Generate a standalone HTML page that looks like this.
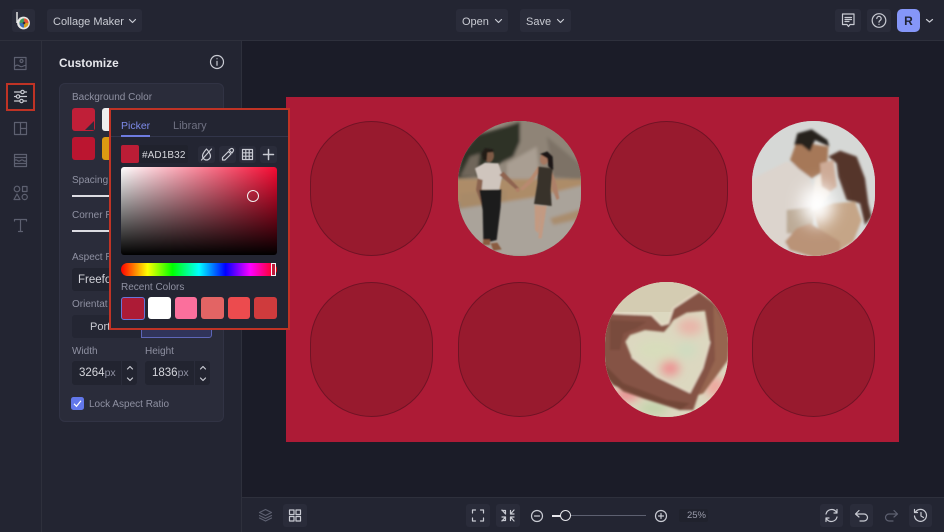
<!DOCTYPE html>
<html><head><meta charset="utf-8"><style>
*{box-sizing:border-box}
html,body{margin:0;padding:0;width:944px;height:532px;overflow:hidden;background:#1b1c28;font-family:"Liberation Sans",sans-serif}
.a{position:absolute}
.t{position:absolute;white-space:nowrap;line-height:14px}
.btn{position:absolute;background:#2a2c3a;border-radius:3px}
svg{position:absolute;overflow:visible}
.ic{fill:none;stroke:#c9cbd3;stroke-width:1.2;stroke-linecap:round;stroke-linejoin:round}
.dim{stroke:#5d6070}
.slot{position:absolute;width:123px;height:135px;border-radius:61.5px;background:#981a2e;border:1px solid #701325}
.ph{position:absolute;width:123px;height:135px;border-radius:61.5px;overflow:hidden;background:#ccc}
.ph svg{left:0;top:0}
.sw{position:absolute;border-radius:3px}
.lb{font-size:10px;color:#8f91a2}
</style></head><body>
<!-- top bar -->
<div class="a" style="left:0;top:0;width:944px;height:41px;background:#232532;border-bottom:1px solid #2e303c"></div>
<div class="btn" style="left:12px;top:9px;width:23px;height:23px"></div>
<svg style="left:12px;top:9px" width="23" height="23"><circle cx="11.5" cy="14" r="6.4" fill="#e8e8e8"/><path d="M5 3v11" stroke="#eee" stroke-width="1.4"/><circle cx="12" cy="14" r="4.6" fill="#d8a020"/><path d="M12 14V9.4A4.6 4.6 0 0 1 16.6 14Z" fill="#e2543a"/><path d="M12 14H7.4A4.6 4.6 0 0 1 12 9.4Z" fill="#3f9a5e"/><path d="M12 14v4.6A4.6 4.6 0 0 1 7.4 14Z" fill="#3a6fb8"/><circle cx="12" cy="14" r="1.3" fill="#333"/></svg>
<div class="btn" style="left:47px;top:9px;width:95px;height:23px"></div>
<div class="t" style="left:53px;top:15px;font-size:11px;color:#c9cbd3">Collage Maker</div>
<svg style="left:128px;top:18px" width="9" height="6" class="ic"><path d="M1.500 1.500 4.500 4.500 7.500 1.500"/></svg>
<div class="btn" style="left:456px;top:9px;width:52px;height:23px"></div>
<div class="t" style="left:462px;top:15px;font-size:11px;color:#c9cbd3">Open</div>
<svg style="left:494px;top:18px" width="9" height="6" class="ic"><path d="M1.500 1.500 4.500 4.500 7.500 1.500"/></svg>
<div class="btn" style="left:520px;top:9px;width:51px;height:23px"></div>
<div class="t" style="left:526px;top:15px;font-size:11px;color:#c9cbd3">Save</div>
<svg style="left:556px;top:18px" width="9" height="6" class="ic"><path d="M1.500 1.500 4.500 4.500 7.500 1.500"/></svg>
<div class="btn" style="left:835px;top:9px;width:26px;height:23px"></div>
<svg style="left:835px;top:9px" width="26" height="23" class="ic"><path d="M7.500 5h11.500v10.500h-4l-1.500 2-1.500-2h-4.500Z"/><path d="M10 8.500h6.500M10 10.500h6.500M10 12.500h4"/></svg>
<div class="btn" style="left:867px;top:9px;width:24px;height:23px"></div>
<svg style="left:867px;top:9px" width="24" height="23" class="ic"><circle cx="12" cy="11.500" r="6.800"/><path d="M9.800 9.500a2.200 2.200 0 1 1 3.400 1.900c-.8.500-1.200 1-1.200 1.800"/><path d="M12 15.300v.1"/></svg>
<div class="a" style="left:897px;top:9px;width:23px;height:23px;border-radius:5px;background:#8596f8"></div>
<div class="t" style="left:897px;top:14px;width:23px;text-align:center;font-size:12px;font-weight:bold;color:#1f2233">R</div>
<svg style="left:925px;top:18px" width="9" height="6" class="ic"><path d="M1.500 1.500 4.500 4 7.500 1.500"/></svg>

<!-- left rail -->
<div class="a" style="left:0;top:41px;width:42px;height:491px;background:#232532;border-right:1px solid #2e303c"></div>
<svg style="left:13px;top:56px" width="15" height="15" class="ic dim"><path d="M1.500 1.500h11.500v12h-11.500Z"/><circle cx="8.500" cy="5" r="1.500"/><path d="M1.500 10.500c3-2.500 4-1 6 0s3-1.500 5.500-1"/></svg>
<div class="a" style="left:6px;top:83px;width:29px;height:28px;border:2px solid #bf3325;background:#20222d"></div>
<svg style="left:13px;top:89px" width="15" height="15" class="ic"><path d="M1.500 3h12M1.500 7.500h12M1.500 12h12"/><circle cx="9.500" cy="3" r="1.700" fill="#20222d"/><circle cx="5" cy="7.500" r="1.700" fill="#20222d"/><circle cx="8.500" cy="12" r="1.700" fill="#20222d"/></svg>
<svg style="left:13px;top:121px" width="15" height="15" class="ic dim"><path d="M1.500 1.500h12v12h-12ZM7.500 1.500v12M7.500 7.500h6"/></svg>
<svg style="left:13px;top:153px" width="15" height="15" class="ic dim"><path d="M1.500 1.500h12v12h-12ZM1.500 4.500h12M1.500 10.500h12"/><path d="M1.500 7.500q1.500-1.200 3 0t3 0 3 0 3 0"/></svg>
<svg style="left:13px;top:185px" width="15" height="16" class="ic dim"><circle cx="4" cy="4" r="2.800"/><path d="M9.500 1.500h4.500v5h-4.500ZM4 9l3 5.500H1Z"/><circle cx="11.700" cy="12" r="2.600"/></svg>
<svg style="left:13px;top:218px" width="15" height="15" class="ic dim"><path d="M1.500 3V1.500h12V3M7.500 1.500v12M5.500 13.500h4"/></svg>

<!-- panel -->
<div class="a" style="left:42px;top:41px;width:200px;height:491px;background:#232532;border-right:1px solid #2e303c"></div>
<div class="t" style="left:59px;top:56px;font-size:11.800px;font-weight:bold;color:#e6e7ec">Customize</div>
<svg style="left:209px;top:54px" width="16" height="16" class="ic"><circle cx="8" cy="8" r="6.500"/><path d="M8 7.300v4M8 4.700v.1"/></svg>
<div class="a" style="left:59px;top:83px;width:165px;height:339px;background:#2a2c3a;border:1px solid #313344;border-radius:6px"></div>
<div class="t lb" style="left:72px;top:91px">Background Color</div>
<div class="sw" style="left:72px;top:108px;width:23px;height:23px;background:#c01f38"></div>
<svg style="left:84px;top:120px" width="11" height="11"><path d="M10 1v9H1Z" fill="#2a2c3a"/></svg>
<div class="sw" style="left:102px;top:108px;width:12px;height:23px;background:#eee"></div>
<div class="sw" style="left:72px;top:137px;width:23px;height:23px;background:#bb1530"></div>
<div class="sw" style="left:102px;top:137px;width:12px;height:23px;background:#dc9a12"></div>
<div class="t lb" style="left:72px;top:174px">Spacing</div>
<div class="a" style="left:72px;top:195px;width:40px;height:2px;background:#dcdce2"></div>
<div class="t lb" style="left:72px;top:209px">Corner R</div>
<div class="a" style="left:72px;top:230px;width:40px;height:2px;background:#dcdce2"></div>
<div class="t lb" style="left:72px;top:251px">Aspect R</div>
<div class="a" style="left:72px;top:268px;width:50px;height:23px;background:#222430;border-radius:3px"></div>
<div class="t" style="left:78px;top:273px;font-size:11.500px;color:#d5d6dc">Freefor</div>
<div class="t lb" style="left:72px;top:298px">Orientat</div>
<div class="a" style="left:72px;top:315px;width:70px;height:23px;background:#242633;border-radius:3px 0 0 3px"></div>
<div class="a" style="left:141px;top:315px;width:71px;height:23px;background:#30345a;border:1px solid #5e66b8;border-radius:0 3px 3px 0"></div>
<div class="t" style="left:90px;top:320px;font-size:11px;color:#c9cbd3">Portrait</div>
<div class="t lb" style="left:72px;top:345px">Width</div>
<div class="t lb" style="left:145px;top:345px">Height</div>
<div class="a" style="left:72px;top:361px;width:49px;height:24px;background:#222430;border-radius:3px 0 0 3px"></div>
<div class="a" style="left:122px;top:361px;width:15px;height:24px;background:#222430;border-radius:0 3px 3px 0"></div>
<div class="a" style="left:145px;top:361px;width:49px;height:24px;background:#222430;border-radius:3px 0 0 3px"></div>
<div class="a" style="left:195px;top:361px;width:15px;height:24px;background:#222430;border-radius:0 3px 3px 0"></div>
<div class="t" style="left:79px;top:366px;font-size:11.500px;color:#d5d6dc">3264<span style="color:#8f91a2;font-size:10.500px">px</span></div>
<div class="t" style="left:152px;top:366px;font-size:11.500px;color:#d5d6dc">1836<span style="color:#8f91a2;font-size:10.500px">px</span></div>
<svg style="left:126px;top:365px" width="8" height="17" class="ic"><path d="M1.500 4 4 1.500 6.500 4M1.500 13 4 15.500 6.500 13"/></svg>
<svg style="left:199px;top:365px" width="8" height="17" class="ic"><path d="M1.500 4 4 1.500 6.500 4M1.500 13 4 15.500 6.500 13"/></svg>
<div class="a" style="left:71px;top:397px;width:13px;height:13px;border-radius:2.500px;background:#6277ea"></div>
<svg style="left:71px;top:397px" width="13" height="13" fill="none" stroke="#fff" stroke-width="1.200"><path d="M3 6.800 5.500 9.300 10 3.800"/></svg>
<div class="t lb" style="left:89px;top:398px">Lock Aspect Ratio</div>

<!-- canvas -->
<div class="a" style="left:242px;top:41px;width:702px;height:456px;background:#1b1c28"></div>
<div class="a" style="left:286px;top:97px;width:613px;height:345px;background:#ad1b36"></div>
<div class="slot" style="left:310px;top:121px"></div>
<div class="slot" style="left:605px;top:121px"></div>
<div class="slot" style="left:310px;top:282px"></div>
<div class="slot" style="left:458px;top:282px"></div>
<div class="slot" style="left:752px;top:282px"></div>

<!-- photo 1 -->
<div class="ph" style="left:458px;top:121px;background:#9a8f82"><svg width="123" height="135" viewBox="54 33 369 405"><defs><filter id="b1" x="-20%" y="-20%" width="140%" height="140%"><feGaussianBlur stdDeviation="5"/></filter><filter id="b2" x="-20%" y="-20%" width="140%" height="140%"><feGaussianBlur stdDeviation="2.500"/></filter></defs>
<rect x="54" y="33" width="369" height="405" fill="#948a7e"/>
<g filter="url(#b1)"><rect x="190" y="20" width="240" height="200" fill="#8f8477"/><path d="M50 205 66 130 110 75 180 55 240 35 240 95 220 140 170 165 120 200Z" fill="#2f3127"/><path d="M60 200 90 140 120 130 110 200Z" fill="#6f665a"/><path d="M200 160 290 110 300 210 200 215Z" fill="#a99e92"/><path d="M320 80 430 170 430 210 340 200Z" fill="#7d7266"/><rect x="40" y="207" width="390" height="70" fill="#ad8c68"/><path d="M40 300 280 262 430 225 430 440 40 440Z" fill="#aaa39a"/><path d="M330 325 430 295 430 325 340 345Z" fill="#a98d6e"/><path d="M60 250 200 240 200 275 60 295Z" fill="#a88a68"/></g>
<g filter="url(#b2)"><path d="M105 175 135 158 175 160 187 195 178 240 125 238 115 210Z" fill="#cfc5bd"/><path d="M113 205 108 240 125 285 145 290 125 240 128 210Z" fill="#8a6350"/><path d="M178 195 230 240 238 235 190 185Z" fill="#8f6450"/><path d="M118 240 184 238 182 290 170 390 150 395 145 320 128 300Z" fill="#1e1b1c"/><path d="M128 300 150 310 150 390 130 390Z" fill="#1e1b1c"/><path d="M130 388 150 388 150 405 128 405ZM152 400 172 398 185 418 160 422Z" fill="#8a5b40"/><ellipse cx="147" cy="137" rx="15" ry="20" fill="#7e5a44"/><path d="M125 130 135 114 160 118 160 126 142 128 140 152 130 150Z" fill="#201a18"/>
<path d="M240 236 270 205 295 168 300 180 276 218 248 242Z" fill="#b88a70"/><path d="M335 180 350 225 358 265 350 270 336 235Z" fill="#ad8068"/><path d="M295 170 338 175 332 240 335 288 282 282 292 220Z" fill="#39332a"/><path d="M284 285 305 288 295 370 285 360ZM305 288 320 288 305 385 295 385Z" fill="#c39a82"/><ellipse cx="312" cy="148" rx="12" ry="16" fill="#a57760"/><path d="M300 132 322 124 338 140 340 180 325 170 322 145Z" fill="#1d1717"/><circle cx="233" cy="240" r="6" fill="#b07f66"/></g>
</svg></div>

<!-- photo 2 -->
<div class="ph" style="left:752px;top:121px;background:#d8d9d7"><svg width="123" height="135" viewBox="36 33 369 405"><defs><filter id="b3" x="-30%" y="-30%" width="160%" height="160%"><feGaussianBlur stdDeviation="4"/></filter><filter id="b4" x="-80%" y="-80%" width="260%" height="260%"><feGaussianBlur stdDeviation="24"/></filter></defs>
<rect x="36" y="33" width="369" height="405" fill="#d6d8d6"/>
<g filter="url(#b3)"><path d="M20 215 80 185 140 155 190 170 220 230 225 300 150 380 130 440 20 440Z" fill="#dcd4cd"/><path d="M140 300 225 290 215 370 140 370Z" fill="#bcaa96"/><path d="M150 150 170 95 265 110 262 155 240 190 215 205 175 175Z" fill="#a67858"/><path d="M163 105 172 70 215 58 262 90 268 110 225 90 210 125 185 105Z" fill="#28201c"/><path d="M225 205 250 190 270 250 230 300 215 300Z" fill="#efe6dc"/><path d="M240 160 280 150 290 230 270 245 245 230Z" fill="#cdaa96"/><path d="M265 140 300 122 350 140 375 205 385 280 395 320 375 345 360 280 320 270 295 200 290 160Z" fill="#553629"/><path d="M220 300 280 280 345 275 365 330 340 395 300 420 240 370Z" fill="#c5a587"/><path d="M210 340 300 395 300 425 230 445 150 420 135 395 170 355Z" fill="#ba9377"/></g>
<ellipse cx="232" cy="285" rx="50" ry="60" fill="#fff" filter="url(#b4)"/>
</svg></div>

<!-- photo 3 -->
<div class="ph" style="left:605px;top:282px;background:#d4cdb4"><svg width="123" height="135" viewBox="45 36 369 405"><defs><filter id="b5" x="-50%" y="-50%" width="200%" height="200%"><feGaussianBlur stdDeviation="14"/></filter><filter id="b6" x="-10%" y="-10%" width="120%" height="120%"><feGaussianBlur stdDeviation="3"/></filter></defs>
<rect x="45" y="36" width="369" height="405" fill="#dcd8c0"/>
<rect x="45" y="36" width="369" height="90" fill="#d4ccb2"/>
<g filter="url(#b5)"><ellipse cx="240" cy="295" rx="28" ry="22" fill="#ee8d8f"/><ellipse cx="300" cy="170" rx="38" ry="25" fill="#e9b4a8"/><ellipse cx="200" cy="240" rx="60" ry="30" fill="#d8ddbc"/><ellipse cx="110" cy="375" rx="40" ry="18" fill="#ec8a8e"/><ellipse cx="190" cy="415" rx="45" ry="18" fill="#bfd3a8"/><ellipse cx="375" cy="350" rx="30" ry="30" fill="#eea79e"/><ellipse cx="290" cy="240" rx="30" ry="25" fill="#cfdcc0"/></g>
<g filter="url(#b6)"><path fill-rule="evenodd" d="M30 130 70 130 185 135 215 165 235 160 250 115 325 65 385 110 420 190 414 270 370 330 325 375 310 420 270 420 160 385 100 365 60 330 30 280ZM222 186 165 180 120 195 106 215 125 262 200 320 300 368 338 295 360 215 345 122 290 128 250 150 240 165Z" fill="#855344"/>
<path d="M30 270 100 340 230 390 300 400 270 420 160 385 70 345 30 300Z" fill="#734639"/><path d="M370 100 420 190 414 270 340 370 325 375 375 270Z" fill="#96654f"/><path d="M60 150 170 155 140 175 100 190 90 240 60 240Z" fill="#794b3d"/>
<path d="M70 130 185 135 215 165 235 160 250 115 325 65" fill="none" stroke="#f2e3d0" stroke-width="4"/>
<path d="M125 262 200 320 300 368 338 295 360 215" fill="none" stroke="#f0e0d0" stroke-width="3"/></g>
</svg></div>

<!-- bottom bar -->
<div class="a" style="left:242px;top:497px;width:702px;height:35px;background:#232532;border-top:1px solid #2e303c"></div>
<svg style="left:258px;top:508px" width="15" height="15" class="ic dim"><path d="M7.500 1.500 13.500 4.500 7.500 7.500 1.500 4.500ZM1.500 7.500l6 3 6-3M1.500 10l6 3 6-3"/></svg>
<div class="btn" style="left:283px;top:504px;width:24px;height:23px"></div>
<svg style="left:283px;top:504px" width="24" height="23" class="ic"><path d="M6.500 6h4.500v4.500h-4.500ZM13 6h4.500v4.500H13ZM6.500 12.500h4.500V17h-4.500ZM13 12.500h4.500V17H13Z"/></svg>
<div class="btn" style="left:466px;top:504px;width:24px;height:23px"></div>
<svg style="left:466px;top:504px" width="24" height="23" class="ic"><path d="M6.500 9V6h3M14.500 6h3v3M17.500 14v3h-3M9.500 17h-3v-3"/></svg>
<div class="btn" style="left:496px;top:504px;width:24px;height:23px"></div>
<svg style="left:496px;top:504px" width="24" height="23" class="ic"><path d="M6 6.500h3.500V10M6 6 9.500 10M18 6l-3.500 4M14.500 6.500V10H18M6 16.500h3.500V13H6M18 13h-3.500v3.500M14.500 13l3.500 4M9.500 13 6 17"/></svg>
<svg style="left:530px;top:509px" width="14" height="14" class="ic"><circle cx="7" cy="7" r="5.500"/><path d="M4.500 7h5"/></svg>
<div class="a" style="left:552px;top:515px;width:94px;height:1px;background:#5d6070"></div>
<div class="a" style="left:552px;top:515px;width:12px;height:2px;background:#e6e6ea"></div>
<div class="a" style="left:560px;top:510px;width:11px;height:11px;border-radius:50%;background:#232532;border:1.500px solid #e6e6ea"></div>
<svg style="left:654px;top:509px" width="14" height="14" class="ic"><circle cx="7" cy="7" r="5.500"/><path d="M4.500 7h5M7 4.500v5"/></svg>
<div class="a" style="left:679px;top:509px;width:29px;height:13px;background:#20222d;border-radius:2px"></div>
<div class="t" style="left:679px;top:509px;width:27px;text-align:right;font-size:9.500px;color:#9a9cab">25%</div>
<div class="btn" style="left:820px;top:504px;width:23px;height:23px"></div>
<svg style="left:820px;top:504px" width="23" height="23" class="ic"><path d="M6 10a5.800 5.800 0 0 1 10-2.500l1 1.500V5.500M17 13a5.800 5.800 0 0 1-10 2.500l-1-1.500v3.500M17 9h-3M6 14h3"/></svg>
<div class="btn" style="left:850px;top:504px;width:23px;height:23px"></div>
<svg style="left:850px;top:504px" width="23" height="23" class="ic"><path d="M9 6.500 5.500 10 9 13M5.500 10H14a3.300 3.300 0 0 1 0 7h-4"/></svg>
<svg style="left:880px;top:504px" width="23" height="23" class="ic dim"><path d="M14 6.500 17.500 10 14 13M17.500 10H9a3.300 3.300 0 0 0 0 7h4"/></svg>
<div class="btn" style="left:909px;top:504px;width:23px;height:23px"></div>
<svg style="left:909px;top:504px" width="23" height="23" class="ic"><path d="M6.500 8a6 6 0 1 1-1 4M5.500 5.500v3h3M12 8.500v3.500l2.500 1.500"/></svg>

<!-- picker popup -->
<div class="a" style="left:109px;top:108px;width:181px;height:222px;background:#232532;border:2px solid #bf3325"></div>
<div class="t" style="left:121px;top:119px;font-size:10.500px;color:#7e8bea">Picker</div>
<div class="t" style="left:173px;top:119px;font-size:11px;color:#6f7182">Library</div>
<div class="a" style="left:111px;top:136px;width:177px;height:1px;background:#32354a"></div>
<div class="a" style="left:121px;top:135px;width:29px;height:2px;background:#6e7ce0"></div>
<div class="a" style="left:121px;top:145px;width:67px;height:18px;background:#20222d;border-radius:2px"></div>
<div class="a" style="left:121px;top:145px;width:18px;height:18px;background:#bb1d36;border-radius:2px"></div>
<div class="t" style="left:142px;top:149px;font-size:10px;letter-spacing:.1px;color:#d5d6dc">#AD1B32</div>
<div class="btn" style="left:198px;top:146px;width:17px;height:17px"></div>
<div class="btn" style="left:219px;top:146px;width:17px;height:17px"></div>
<div class="btn" style="left:239px;top:146px;width:17px;height:17px"></div>
<div class="btn" style="left:260px;top:146px;width:17px;height:17px"></div>
<svg style="left:198px;top:146px" width="17" height="17" class="ic"><path d="M8.500 3C5.800 6 4.500 8 4.500 10a4 4 0 0 0 8 0C12.500 8 11.200 6 8.500 3ZM3.500 14 13.500 3"/></svg>
<svg style="left:219px;top:146px" width="17" height="17" class="ic"><path d="M9.500 5.500 12 8 6 14H3.500V11.500ZM10 4l1.500-1a1.500 1.500 0 0 1 2.500 2.500L13 7Z"/></svg>
<svg style="left:239px;top:146px" width="17" height="17" class="ic"><path d="M3.500 3.500h10v10h-10ZM3.500 6.800h10M3.500 10.200h10M6.800 3.500v10M10.200 3.500v10"/></svg>
<svg style="left:260px;top:146px" width="17" height="17" class="ic"><path d="M8.500 3.500v10M3.500 8.500h10" stroke-width="1.500"/></svg>
<div class="a" style="left:121px;top:167px;width:156px;height:88px;border-radius:3px;background:linear-gradient(to top,#000,rgba(0,0,0,0)),linear-gradient(to right,#fff,#f50a32)"></div>
<div class="a" style="left:247px;top:190px;width:12px;height:12px;border-radius:50%;border:1.500px solid #f2f2f2"></div>
<div class="a" style="left:121px;top:263px;width:156px;height:13px;border-radius:7px;background:linear-gradient(to right,#f00 0%,#ff0 17%,#0f0 33%,#0ff 50%,#00f 67%,#f0f 83%,#f00 100%)"></div>
<div class="a" style="left:271px;top:263px;width:5px;height:13px;border:1.500px solid #f5f5f5;background:#c01a3a"></div>
<div class="t lb" style="left:121px;top:281px">Recent Colors</div>
<div class="sw" style="left:121px;top:297px;width:24px;height:23px;background:#ad1b36;border:1.500px solid #6a74d8"></div>
<div class="sw" style="left:148px;top:297px;width:23px;height:22px;background:#fff"></div>
<div class="sw" style="left:175px;top:297px;width:22px;height:22px;background:#fb6f9c"></div>
<div class="sw" style="left:201px;top:297px;width:23px;height:22px;background:#e36464"></div>
<div class="sw" style="left:228px;top:297px;width:22px;height:22px;background:#ec4b4e"></div>
<div class="sw" style="left:254px;top:297px;width:23px;height:22px;background:#cf3b3d"></div>
</body></html>
